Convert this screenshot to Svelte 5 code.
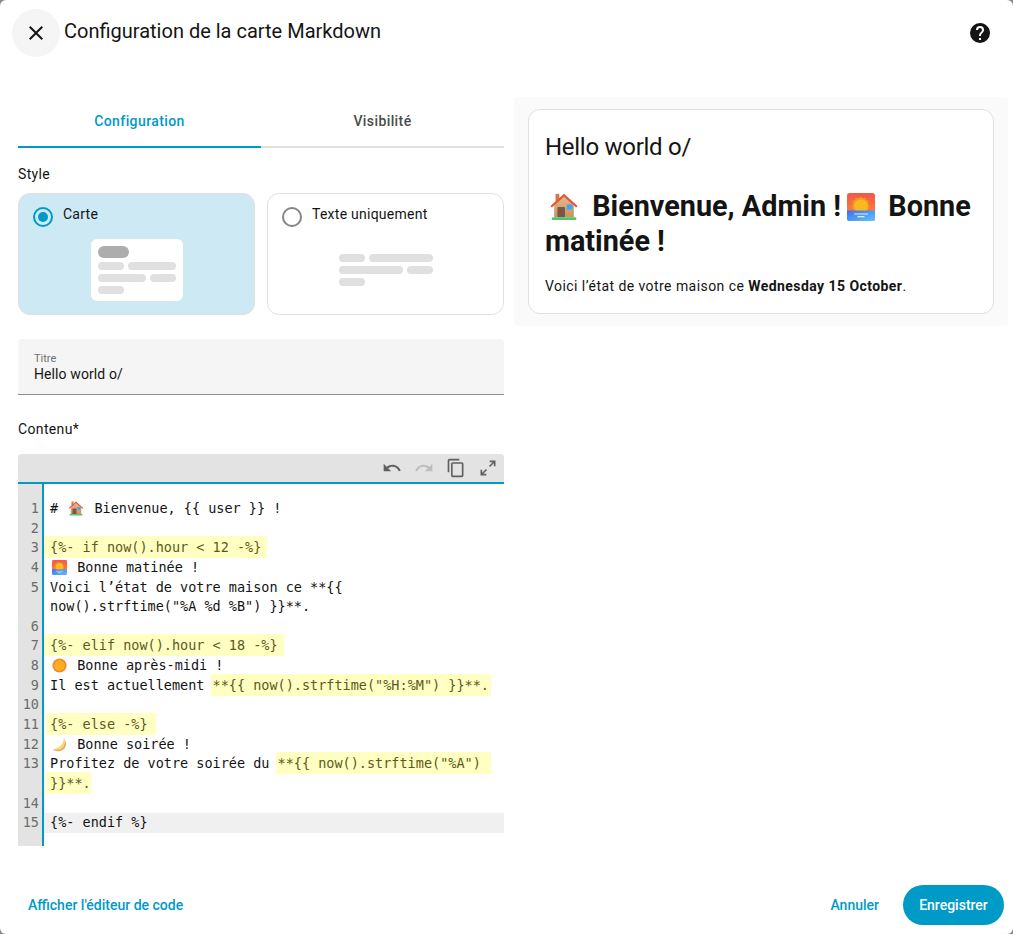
<script>
	const rows = [
		{ n: 1, parts: [{ t: '# ' }, { e: 'house' }, { t: ' Bienvenue, {{ user }} !' }] },
		{ n: 2, parts: [] },
		{ n: 3, parts: [{ h: '{%- if now().hour < 12 -%}', cls: 'tag' }] },
		{ n: 4, parts: [{ e: 'sunrise' }, { t: ' Bonne matinée !' }] },
		{ n: 5, parts: [{ t: 'Voici l’état de votre maison ce **{{' }] },
		{ n: '', parts: [{ t: 'now().strftime("%A %d %B") }}**.' }] },
		{ n: 6, parts: [] },
		{ n: 7, parts: [{ h: '{%- elif now().hour < 18 -%}', cls: 'tag' }] },
		{ n: 8, parts: [{ e: 'sun' }, { t: ' Bonne après-midi !' }] },
		{ n: 9, parts: [{ t: 'Il est actuellement ' }, { h: '**{{ now().strftime("%H:%M") }}**.' }] },
		{ n: 10, parts: [] },
		{ n: 11, parts: [{ h: '{%- else -%} ', cls: 'tag-else' }] },
		{ n: 12, parts: [{ e: 'moon' }, { t: ' Bonne soirée !' }] },
		{ n: 13, parts: [{ t: 'Profitez de votre soirée du ' }, { h: '**{{ now().strftime("%A") ' }] },
		{ n: '', parts: [{ h: '}}**.', cls: 'tag-else' }] },
		{ n: 14, parts: [] },
		{ n: 15, parts: [{ t: '{%- endif %}' }], active: true }
	];
</script>

{#snippet house(size)}
	<svg class="emoji" width={size} height={size} viewBox="0 0 32 32">
		<defs>
			<linearGradient id="wall" x1="0" y1="0" x2="0" y2="1">
				<stop offset="0" stop-color="#e8b98c" />
				<stop offset="1" stop-color="#c9935f" />
			</linearGradient>
		</defs>
		<rect x="7" y="3" width="4" height="8" fill="#d9763f" />
		<path d="M5.5 14 16 5l10.5 9v14h-21z" fill="url(#wall)" />
		<path d="M1.5 16 16 3l14.5 13-1.6 1.6L16 6.2 3.1 17.6z" fill="#e8553a" />
		<rect x="9" y="17" width="8" height="11" rx="1" fill="#7a5548" />
		<rect x="19" y="14" width="6" height="6" rx="1" fill="#3fa9ea" />
		<rect x="3" y="28" width="26" height="3" rx="1" fill="#4fc76c" />
	</svg>
{/snippet}

{#snippet sunrise(size)}
	<svg class="emoji sunrise" width={size} height={size} viewBox="0 0 32 32">
		<defs>
			<linearGradient id="sky" x1="0" y1="0" x2="0" y2="1">
				<stop offset="0" stop-color="#f2574a" />
				<stop offset="1" stop-color="#fb8f3c" />
			</linearGradient>
			<linearGradient id="sea" x1="0" y1="0" x2="1" y2="1">
				<stop offset="0" stop-color="#3f6df0" />
				<stop offset="1" stop-color="#5ec4f8" />
			</linearGradient>
		</defs>
		<rect width="32" height="32" rx="3" fill="url(#sky)" />
		<path d="M16 4l2 2 3-1 1 3 3 1-1 3 2 3-2 4H7l-2-4 2-3-1-3 3-1 1-3 3 1z" fill="#f6921e" />
		<circle cx="16" cy="15" r="8" fill="#fbb91f" />
		<path d="M0 20h32v9a3 3 0 0 1-3 3H3a3 3 0 0 1-3-3z" fill="url(#sea)" />
		<path d="M8 24h16M12 27h8" stroke="#dfeeff" stroke-width="1.2" />
	</svg>
{/snippet}

{#snippet sun(size)}
	<svg class="emoji" width={size} height={size} viewBox="0 0 32 32">
		<circle cx="16" cy="16" r="15" fill="#f4852e" />
		<circle cx="16" cy="16" r="11.5" fill="#fbae1d" />
	</svg>
{/snippet}

{#snippet moon(size)}
	<svg class="emoji" width={size} height={size} viewBox="0 0 32 32">
		<path d="M24 2c6 8 3 24-20 24-1 0-2 0-3-.5C6 31 20 33 27 24c5-7 3-17-3-22z" fill="#f3a55a" />
		<path d="M24 2c3 10-6 21-20 24 9 3 17 1 21-6 3-6 2-13-1-18z" fill="#fcd27a" />
	</svg>
{/snippet}

<div class="dialog">
	<header class="top">
		<button class="close" aria-label="Fermer">
			<svg width="24" height="24" viewBox="0 0 24 24"><path d="M19 6.41 17.59 5 12 10.59 6.41 5 5 6.41 10.59 12 5 17.59 6.41 19 12 13.41 17.59 19 19 17.59 13.41 12z" /></svg>
		</button>
		<h2>Configuration de la carte Markdown</h2>
		<svg class="help" width="24" height="24" viewBox="0 0 24 24"><path d="M15.07 11.25l-.9.92C13.45 12.89 13 13.5 13 15h-2v-.5c0-1.11.45-2.11 1.17-2.83l1.24-1.26c.37-.36.59-.86.59-1.41a2 2 0 0 0-2-2 2 2 0 0 0-2 2H8a4 4 0 0 1 4-4 4 4 0 0 1 4 4c0 .88-.36 1.67-.93 2.25M13 19h-2v-2h2M12 2A10 10 0 0 0 2 12a10 10 0 0 0 10 10 10 10 0 0 0 10-10c0-5.53-4.5-10-10-10z" /></svg>
	</header>

	<div class="body">
		<section class="form">
			<div class="tabs">
				<div class="tab active">Configuration</div>
				<div class="tab">Visibilité</div>
			</div>

			<div class="label style-label">Style</div>
			<div class="choices">
				<div class="choice selected">
					<div class="choice-head">
						<span class="radio on"></span>
						<span>Carte</span>
					</div>
					<div class="mini-wrap">
						<div class="mini card">
							<div class="sk-row"><i class="sk title"></i></div>
							<div class="sk-row"><i class="sk s"></i><i class="sk l"></i></div>
							<div class="sk-row"><i class="sk m"></i><i class="sk s"></i></div>
							<div class="sk-row"><i class="sk s"></i></div>
						</div>
					</div>
				</div>
				<div class="choice">
					<div class="choice-head">
						<span class="radio"></span>
						<span>Texte uniquement</span>
					</div>
					<div class="mini-wrap">
						<div class="mini plain">
							<div class="sk-row"><i class="sk s"></i><i class="sk xl"></i></div>
							<div class="sk-row"><i class="sk xl"></i><i class="sk s"></i></div>
							<div class="sk-row"><i class="sk s"></i></div>
						</div>
					</div>
				</div>
			</div>

			<div class="field">
				<div class="field-label">Titre</div>
				<div class="field-value">Hello world o/</div>
			</div>

			<div class="label content-label">Contenu*</div>

			<div class="editor">
				<div class="toolbar">
					<svg width="20" height="20" viewBox="0 0 24 24" fill="#616161"><path d="M12.5 8c-2.65 0-5.05 1-6.9 2.6L2 7v9h9l-3.62-3.62c1.39-1.16 3.16-1.88 5.12-1.88 3.54 0 6.55 2.31 7.6 5.5l2.37-.78C21.08 11.03 17.15 8 12.5 8z" /></svg>
					<svg width="20" height="20" viewBox="0 0 24 24" fill="#bdbdbd"><path d="M18.4 10.6C16.55 9 14.15 8 11.5 8c-4.65 0-8.58 3.03-9.96 7.22L3.9 16c1.05-3.19 4.05-5.5 7.6-5.5 1.95 0 3.73.72 5.12 1.88L13 16h9V7z" /></svg>
					<svg width="20" height="20" viewBox="0 0 24 24" fill="#616161"><path d="M19 21H8V7h11m0-2H8a2 2 0 0 0-2 2v14a2 2 0 0 0 2 2h11a2 2 0 0 0 2-2V7a2 2 0 0 0-2-2m-3-4H4a2 2 0 0 0-2 2v14h2V3h12z" /></svg>
					<svg width="20" height="20" viewBox="0 0 24 24" fill="#616161"><path d="M10 21v-2H6.41l4.5-4.5-1.41-1.41-4.5 4.5V14H3v7zm4.5-10.09 4.5-4.5V10h2V3h-7v2h3.59l-4.5 4.5z" /></svg>
				</div>
				<div class="code">
					{#each rows as row}
						<div class="row" class:active={row.active}>
							<span class="num">{row.n}</span>
							<div class="line">
								{#each row.parts as p}
									{#if p.e === 'house'}{@render house(16)}
									{:else if p.e === 'sunrise'}{@render sunrise(15)}
									{:else if p.e === 'sun'}{@render sun(15)}
									{:else if p.e === 'moon'}{@render moon(15)}
									{:else if p.h}<span class="hl {p.cls ?? ''}">{p.h}</span>
									{:else}{p.t}{/if}
								{/each}
							</div>
						</div>
					{/each}
				</div>
			</div>
		</section>

		<aside class="preview">
			<div class="preview-card">
				<div class="card-title">Hello world o/</div>
				<h1>{@render house(30)} Bienvenue, Admin !{@render sunrise(28)} Bonne matinée !</h1>
				<p>Voici l’état de votre maison ce <b>Wednesday 15 October</b>.</p>
			</div>
		</aside>
	</div>

	<footer class="bottom">
		<span class="link">Afficher l'éditeur de code</span>
		<span class="actions">
			<span class="link">Annuler</span>
			<button class="save">Enregistrer</button>
		</span>
	</footer>
</div>

<style>
	:global(body) {
		margin: 0;
		background: #8a8a8a;
		overflow: hidden;
	}
	.dialog {
		width: 1013px;
		height: 934px;
		background: #fff;
		border-radius: 6px;
		display: flex;
		flex-direction: column;
		overflow: hidden;
		color: #141414;
		font-family: Roboto, sans-serif;
		font-size: 14px;
	}
	.top {
		height: 66px;
		flex: none;
		display: flex;
		align-items: flex-start;
		padding: 9px 21px 0 12px;
		box-sizing: border-box;
	}
	.close {
		width: 48px;
		height: 48px;
		flex: none;
		border: 0;
		padding: 0;
		border-radius: 50%;
		background: #f5f5f5;
		display: flex;
		align-items: center;
		justify-content: center;
	}
	.close svg,
	.help {
		fill: #141414;
	}
	h2 {
		margin: 8px 0 0 4px;
		font-size: 20px;
		line-height: 28px;
		font-weight: 400;
		flex: 1;
	}
	.help {
		margin-top: 12px;
	}
	.body {
		flex: 1;
		min-height: 0;
		display: flex;
		padding: 31px 5px 0 18px;
		gap: 10px;
		align-items: flex-start;
	}
	.form {
		width: 486px;
		flex: none;
		height: 749px;
		overflow: hidden;
	}
	.tabs {
		display: flex;
		border-bottom: 2px solid #e0e0e0;
		height: 49px;
	}
	.tab {
		flex: 1;
		text-align: center;
		font-weight: 500;
		letter-spacing: 0.4px;
		line-height: 48px;
		color: #4a4a4a;
		margin-bottom: -2px;
		border-bottom: 2px solid transparent;
	}
	.tab.active {
		color: #009ac7;
		border-bottom-color: #009ac7;
	}
	.label {
		line-height: 20px;
		letter-spacing: 0.35px;
	}
	.style-label {
		margin-top: 16px;
	}
	.choices {
		display: flex;
		gap: 12px;
		margin-top: 9px;
	}
	.choice {
		flex: 1;
		height: 122px;
		box-sizing: border-box;
		border: 1px solid #e0e0e0;
		border-radius: 12px;
		padding: 10px 14px;
		display: flex;
		flex-direction: column;
	}
	.choice.selected {
		background: #cce9f4;
	}
	.choice-head {
		display: flex;
		gap: 10px;
		line-height: 20px;
		letter-spacing: 0.25px;
		height: 20px;
	}
	.radio {
		width: 20px;
		height: 20px;
		flex: none;
		box-sizing: border-box;
		border: 2px solid #858585;
		border-radius: 50%;
		margin-top: 3px;
		position: relative;
	}
	.radio.on {
		border-color: #009ac7;
	}
	.radio.on::after {
		content: '';
		position: absolute;
		inset: 3px;
		border-radius: 50%;
		background: #009ac7;
	}
	.mini-wrap {
		flex: 1;
		display: flex;
		justify-content: center;
		align-items: flex-start;
		margin-top: 15px;
	}
	.mini {
		display: flex;
		flex-direction: column;
		gap: 4px;
	}
	.mini.card {
		width: 92px;
		height: 62px;
		box-sizing: border-box;
		background: #fff;
		border-radius: 6px;
		padding: 7px;
	}
	.mini.plain {
		width: 94px;
		margin-top: 15px;
	}
	.sk-row {
		display: flex;
		gap: 4px;
	}
	.sk {
		display: block;
		height: 8px;
		border-radius: 4px;
		background: #e0e0e0;
	}
	.sk.title {
		width: 31px;
		height: 12px;
		border-radius: 6px;
		background: #adadad;
	}
	.sk.s { width: 26px; }
	.sk.m { width: 48px; }
	.sk.l { width: 48px; }
	.sk.xl { width: 64px; }
	.field {
		margin-top: 24px;
		height: 56px;
		box-sizing: border-box;
		background: #f5f5f5;
		border-bottom: 1px solid #8c8c8c;
		border-radius: 4px 4px 0 0;
		padding: 14px 16px 0;
	}
	.field-label {
		font-size: 11px;
		line-height: 11px;
		color: #6f6f6f;
	}
	.field-value {
		line-height: 20px;
		letter-spacing: 0.1px;
	}
	.content-label {
		margin-top: 24px;
	}
	.editor {
		margin-top: 15px;
	}
	.toolbar {
		height: 28px;
		background: #e3e3e3;
		border-radius: 4px 4px 0 0;
		display: flex;
		align-items: center;
		justify-content: flex-end;
		gap: 12px;
		padding-right: 6px;
	}
	.code {
		border-top: 2px solid #009ac7;
		padding: 15px 0 0;
		font-family: 'DejaVu Sans Mono', monospace;
		font-size: 13.5px;
		line-height: 19.65px;
		background: linear-gradient(90deg, #e3e3e3 24px, #009ac7 24px, #009ac7 26px, #fff 26px);
		min-height: 400px;
	}
	.row {
		display: flex;
		height: 19.65px;
	}
	.num {
		width: 21px;
		flex: none;
		text-align: right;
		color: #6c6c6c;
	}
	.line {
		flex: 1;
		margin-left: 5px;
		padding-left: 6px;
		white-space: pre;
		color: #141414;
	}
	.row.active .line {
		background: #f0f0f0;
	}
	.hl {
		background: #ffffc2;
		color: #5c5a1e;
		padding: 3px 2px;
		margin-left: -2px;
	}
	.hl.tag {
		padding: 3px 6px 3px 6px;
		margin-left: -6px;
	}
	.hl.tag-else {
		padding: 3px 0 3px 4px;
		margin-left: -4px;
	}
	.emoji {
		display: inline-block;
		vertical-align: -3px;
		margin: 0 2px;
	}
	.preview {
		width: 494px;
		flex: none;
		box-sizing: border-box;
		background: #fafafa;
		border-radius: 4px;
		padding: 12px 14px;
	}
	.preview-card {
		height: 205px;
		box-sizing: border-box;
		background: #fff;
		border: 1px solid #e0e0e0;
		border-radius: 12px;
		padding: 16px;
	}
	.card-title {
		font-size: 24px;
		line-height: 32px;
		letter-spacing: -0.28px;
		margin-top: 5px;
	}
	h1 {
		margin: 26px 0 0;
		font-size: 28.8px;
		line-height: 35px;
		font-weight: 700;
	}
	h1 .emoji {
		vertical-align: -5px;
		margin: 0 6px 0 4px;
	}
	h1 .emoji.sunrise {
		margin-left: 6px;
	}
	p {
		margin: 17px 0 0;
		line-height: 20px;
		letter-spacing: 0.44px;
	}
	.bottom {
		flex: none;
		height: 88px;
		display: flex;
		align-items: flex-start;
		justify-content: space-between;
		padding: 0 9px 0 28px;
	}
	.link {
		color: #009ac7;
		font-weight: 500;
		line-height: 40px;
		margin-top: 39px;
	}
	.actions {
		display: flex;
		gap: 24px;
	}
	.save {
		width: 101px;
		height: 40px;
		margin-top: 39px;
		border: 0;
		border-radius: 20px;
		background: #009ac7;
		color: #fff;
		font: 500 14px Roboto, sans-serif;
	}
</style>
